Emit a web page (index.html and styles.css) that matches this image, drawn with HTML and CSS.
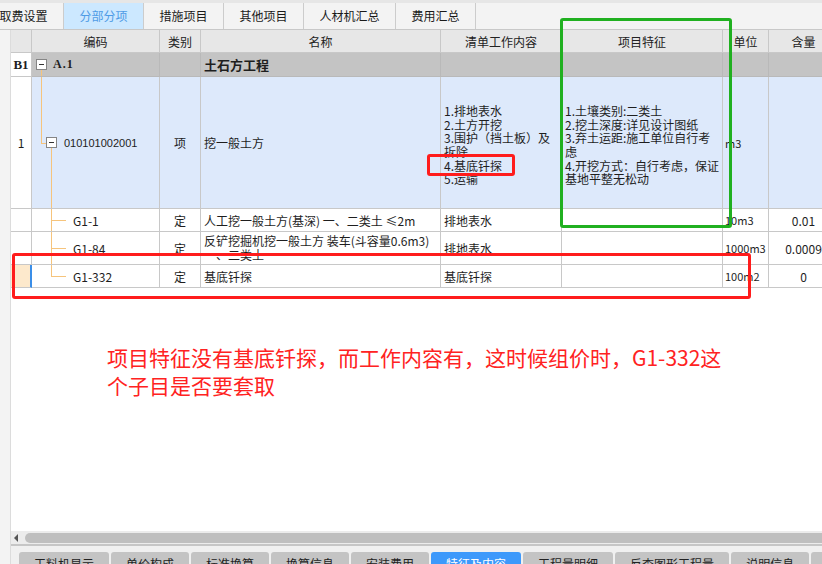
FILE: index.html
```html
<!DOCTYPE html>
<html lang="zh-CN">
<head>
<meta charset="utf-8">
<title>分部分项</title>
<link rel="stylesheet" href="styles.css">
</head>
<body>
<div class="app">
  <div class="tabbar">
    <div class="tab">取费设置</div>
    <div class="tab active">分部分项</div>
    <div class="tab">措施项目</div>
    <div class="tab">其他项目</div>
    <div class="tab wide">人材机汇总</div>
    <div class="tab">费用汇总</div>
  </div>
  <div class="main">
    <div class="strip"></div>
    <div class="content">
      <div class="grid">
        <div class="c h"></div>
        <div class="c h">编码</div>
        <div class="c h">类别</div>
        <div class="c h">名称</div>
        <div class="c h">清单工作内容</div>
        <div class="c h">项目特征</div>
        <div class="c h">单位</div>
        <div class="c h">含量</div>

        <div class="c idx b1">B1</div>
        <div class="c code g lvl0"><span class="ln ln-a-down"></span><span class="box"></span><span class="ctext bold-serif">A.1</span></div>
        <div class="c g"></div>
        <div class="c g name-bold">土石方工程</div>
        <div class="c g"></div>
        <div class="c g"></div>
        <div class="c g"></div>
        <div class="c g"></div>

        <div class="c idx">1</div>
        <div class="c code bl lvl1"><span class="ln ln-a-up"></span><span class="ln ln-a-h"></span><span class="ln ln-b-down"></span><span class="box"></span><span class="ctext num">010101002001</span></div>
        <div class="c bl ctr">项</div>
        <div class="c bl">挖一般土方</div>
        <div class="c bl multi">1.排地表水<br>2.土方开挖<br>3.围护（挡土板）及<br>拆除<br>4.基底钎探<br>5.运输</div>
        <div class="c bl multi">1.土壤类别:二类土<br>2.挖土深度:详见设计图纸<br>3.弃土运距:施工单位自行考<br>虑<br>4.开挖方式：自行考虑，保证<br>基地平整无松动</div>
        <div class="c bl unit">m3</div>
        <div class="c bl"></div>

        <div class="c idx"></div>
        <div class="c code lvl2"><span class="ln ln-b-full"></span><span class="ln ln-b-h"></span><span class="ctext">G1-1</span></div>
        <div class="c ctr">定</div>
        <div class="c">人工挖一般土方(基深) 一、二类土 ≤2m</div>
        <div class="c">排地表水</div>
        <div class="c"></div>
        <div class="c unit">10m3</div>
        <div class="c ctr">0.01</div>

        <div class="c idx"></div>
        <div class="c code lvl2"><span class="ln ln-b-full"></span><span class="ln ln-b-h"></span><span class="ctext">G1-84</span></div>
        <div class="c ctr">定</div>
        <div class="c multi">反铲挖掘机挖一般土方 装车(斗容量0.6m3)<br>一、二类土</div>
        <div class="c">排地表水</div>
        <div class="c"></div>
        <div class="c unit">1000m3</div>
        <div class="c ctr">0.0009</div>

        <div class="c idx cur"></div>
        <div class="c code lvl2"><span class="ln ln-b-up"></span><span class="ln ln-b-h"></span><span class="ctext">G1-332</span></div>
        <div class="c ctr">定</div>
        <div class="c">基底钎探</div>
        <div class="c">基底钎探</div>
        <div class="c"></div>
        <div class="c unit">100m2</div>
        <div class="c ctr">0</div>
      </div>
      <div class="blank"></div>
      <div class="hscroll"><span class="arrow"></span><span class="thumb"></span></div>
      <div class="btabs">
        <div class="btab">工料机显示</div>
        <div class="btab">单价构成</div>
        <div class="btab">标准换算</div>
        <div class="btab">换算信息</div>
        <div class="btab">安装费用</div>
        <div class="btab active">特征及内容</div>
        <div class="btab">工程量明细</div>
        <div class="btab">反查图形工程量</div>
        <div class="btab">说明信息</div>
        <div class="btab">组价方案</div>
      </div>
    </div>
  </div>
  <div class="notes">
    <div class="mark green"></div>
    <div class="mark red1"></div>
    <div class="mark red2"></div>
    <div class="note">项目特征没有基底钎探，而工作内容有，这时候组价时，G1-332这<br>个子目是否要套取</div>
  </div>
</div>
</body>
</html>
```
FILE: styles.css
```css
html, body {
  margin: 0;
  padding: 0;
  background: #fff;
  overflow: hidden;
}
body {
  font-family: "Noto Sans CJK SC", "Noto Sans", sans-serif;
}
.app {
  position: relative;
  width: 822px;
  height: 564px;
  overflow: hidden;
  display: flex;
  flex-direction: column;
  background: #fff;
}

/* top tabs */
.tabbar {
  flex: none;
  height: 30px;
  box-sizing: border-box;
  display: flex;
  margin-left: -16px;
  background: #f3f3f3;
  border-top: 3px solid #e6e6e6;
  border-bottom: 1px solid #c8c8c8;
}
.tab {
  flex: none;
  width: 80px;
  box-sizing: border-box;
  border-right: 1px solid #cccccc;
  font-size: 12px;
  line-height: 26px;
  text-align: center;
  color: #1a1a1a;
}
.tab.wide { width: 92px; }
.tab.active {
  background: #cce8ff;
  color: #4f9be6;
}

.main {
  flex: 1;
  min-height: 0;
  display: flex;
}
.strip {
  flex: none;
  width: 10px;
  background: #f3f3f3;
  border-right: 1px solid #dcdcdc;
}
.content {
  flex: 1;
  min-width: 0;
  display: flex;
  flex-direction: column;
  overflow: hidden;
}

/* grid */
.grid {
  flex: none;
  display: grid;
  grid-template-columns: 21px 128px 41px 240px 121px 161px 46px 70px;
  grid-template-rows: 23px 24px 132px 23px 33px 23px;
  width: max-content;
}
.c {
  position: relative;
  box-sizing: border-box;
  border-right: 1px solid #c8c8c8;
  border-bottom: 1px solid #c8c8c8;
  display: flex;
  align-items: center;
  padding: 0 2px 0 3px;
  font-size: 12px;
  color: #1e1e1e;
  white-space: nowrap;
  overflow: hidden;
}
.c.h {
  justify-content: center;
  background: #e7e7e7;
  padding: 0;
  color: #222;
}
.c.idx {
  justify-content: center;
  background: #fff;
  padding: 0;
}
.c.idx.b1 {
  font-family: "Liberation Serif", serif;
  font-weight: bold;
  font-size: 13px;
}
.c.idx.cur {
  background: #fde9cc;
  border-right: 2px solid #3a8ee8;
}
.c.g { background: #c4c4c4; border-color: #b9b9b9; }
.c.bl { background: #dde9fb; }
.c.ctr { justify-content: center; padding: 0; }
.c.unit { padding-left: 2px; font-size: 11px; }
.c.multi {
  white-space: nowrap;
  line-height: 13.7px;
}
.c.bl.multi { padding-top: 5px; }
.name-bold {
  font-weight: bold;
  font-size: 13px;
}
.bold-serif {
  font-family: "Liberation Serif", serif;
  font-weight: bold;
  font-size: 12px;
  letter-spacing: 1px;
}
.num {
  font-family: "Liberation Sans", sans-serif;
  font-size: 11px;
}

/* tree */
.code { padding: 0; }
.code.lvl0 { padding-left: 4px; }
.code.lvl1 { padding-left: 14px; }
.code.lvl2 { padding-left: 41px; }
.box {
  flex: none;
  position: relative;
  width: 11px;
  height: 11px;
  box-sizing: border-box;
  border: 1px solid #858585;
  background: #fff;
  margin-right: 7px;
}
.box::after {
  content: "";
  position: absolute;
  left: 2px;
  top: 4px;
  width: 5px;
  height: 1px;
  background: #333;
}
.code.lvl0 .box { margin-right: 6px; }
.ln {
  position: absolute;
  background: #f6c47c;
}
.ln-a-down { left: 9px; top: 17px; bottom: 0; width: 1px; }
.ln-a-up { left: 9px; top: 0; height: 66px; width: 1px; }
.ln-a-h { left: 9px; top: 66px; width: 6px; height: 1px; }
.ln-b-down { left: 19px; top: 71px; bottom: 0; width: 1px; }
.ln-b-full { left: 19px; top: 0; bottom: 0; width: 1px; }
.ln-b-up { left: 19px; top: 0; height: 12px; width: 1px; }
.ln-b-h { left: 19px; top: 50%; width: 15px; height: 1px; }
.ctext { position: relative; }

.blank {
  flex: 1;
  min-height: 0;
  background: #fff;
}

/* scrollbar */
.hscroll {
  flex: none;
  height: 15px;
  box-sizing: border-box;
  background: #ececec;
  border-bottom: 2px solid #c6c6c6;
  padding: 2px 0 1px 0;
  display: flex;
  align-items: center;
}
.arrow {
  flex: none;
  width: 0;
  height: 0;
  margin-left: 3px;
  border-right: 4px solid #555;
  border-top: 4px solid transparent;
  border-bottom: 4px solid transparent;
}
.thumb {
  flex: 1;
  height: 10px;
  margin-left: 7px;
  background: #bfbfbf;
  border-radius: 5px 0 0 5px;
}

/* bottom tabs */
.btabs {
  flex: none;
  height: 18px;
  box-sizing: border-box;
  overflow: hidden;
  background: #f0f0f0;
  display: flex;
  gap: 2px;
  padding: 6px 0 0 8px;
}
.btab {
  flex: none;
  height: 22px;
  padding: 3px 15px 0 15px;
  box-sizing: border-box;
  background: #c4c4c4;
  border-radius: 3px 3px 0 0;
  font-size: 12px;
  line-height: 18px;
  color: #222;
}
.btab.active {
  background: #3d99fb;
  color: #fff;
}

/* annotations */
.notes {
  position: absolute;
  left: 0;
  top: 0;
  right: 0;
  bottom: 0;
  pointer-events: none;
}
.mark {
  position: absolute;
  box-sizing: border-box;
  border-radius: 3px;
}
.green {
  left: 560px;
  top: 18px;
  width: 172px;
  height: 210px;
  border: 3px solid #20b020;
}
.red1 {
  left: 427px;
  top: 154px;
  width: 88px;
  height: 22px;
  border: 3px solid #ff1c1c;
}
.red2 {
  left: 12px;
  top: 253px;
  width: 739px;
  height: 46px;
  border: 3px solid #ff1c1c;
}
.note {
  position: absolute;
  left: 107px;
  top: 343px;
  font-size: 21px;
  line-height: 28px;
  color: #ff2222;
  white-space: nowrap;
}
```
